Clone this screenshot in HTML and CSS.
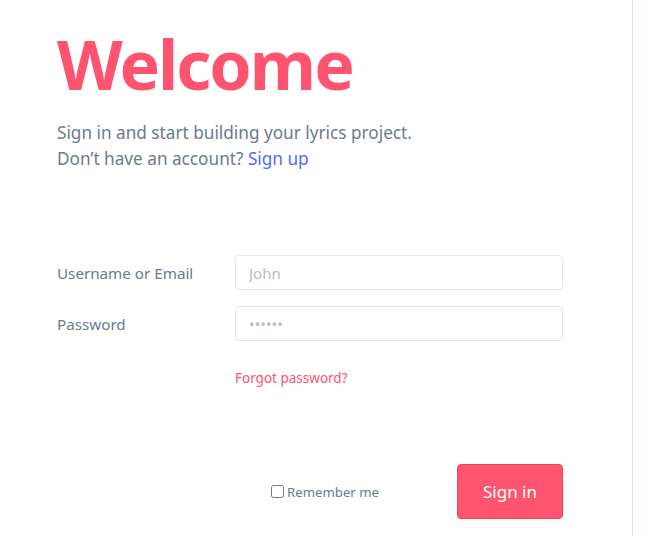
FILE: index.html
```html
<!DOCTYPE html>
<html lang="en">
<head>
<meta charset="utf-8">
<title>Welcome</title>
<link rel="stylesheet" href="styles.css">
</head>
<body>
<div class="layout">
  <main class="panel">
    <h1 class="title">Welcome</h1>
    <p class="intro">Sign in and start building your lyrics project.<br>Don’t have an account? <a href="#" class="link-blue">Sign up</a></p>
    <form class="form">
      <div class="row">
        <label class="label" for="user">Username or Email</label>
        <input class="input" id="user" type="text" placeholder="John">
      </div>
      <div class="row">
        <label class="label" for="pass">Password</label>
        <input class="input" id="pass" type="password" placeholder="••••••">
      </div>
      <div class="row">
        <span></span>
        <a href="#" class="forgot">Forgot password?</a>
      </div>
      <div class="actions">
        <label class="remember"><input type="checkbox" class="check"> Remember me</label>
        <button type="button" class="btn">Sign in</button>
      </div>
    </form>
  </main>
  <aside class="side"></aside>
</div>
</body>
</html>
```
FILE: styles.css
```css
* { box-sizing: border-box; }
html, body { margin: 0; height: 100%; }
body {
  font-family: "Noto Sans", "Open Sans", sans-serif;
  color: #6b7a90;
  background: #fcfcfd;
}
.layout {
  display: flex;
  height: 536px;
}
.panel {
  width: 633px;
  background: #fff;
  border-right: 1px solid #e2e4ee;
  padding: 22px 0 0 57px;
}
.side { flex: 1; }
.title {
  margin: 0;
  font-size: 68px;
  font-weight: 700;
  color: #ff546f;
  line-height: 84px;
  letter-spacing: -2px;
}
.intro {
  margin: 14px 0 0;
  font-size: 17.2px;
  line-height: 26px;
}
.link-blue { color: #4d6bfe; text-decoration: none; }
.form {
  margin-top: 83px;
  width: 506px;
}
.row {
  display: grid;
  grid-template-columns: 178px 328px;
  align-items: center;
  margin-bottom: 16px;
}
.label { font-size: 15.2px; }
.input {
  height: 35px;
  border: 1px solid #e3e6ee;
  border-radius: 4px;
  padding: 0 13px;
  font: inherit;
  font-size: 15px;
  color: #6b7a90;
}
.input::placeholder { color: #b5bbc6; }
.forgot {
  margin-top: 12px;
  font-size: 13.5px;
  color: #ff546f;
  text-decoration: none;
}
.actions {
  margin-top: 77px;
  display: flex;
  align-items: center;
  justify-content: flex-end;
  gap: 78px;
}
.remember {
  font-size: 13.2px;
  display: flex;
  align-items: center;
  gap: 3px;
}
.check { margin: 0; width: 13px; height: 13px; }
.btn {
  width: 106px;
  height: 55px;
  background: #ff546f;
  border: 1px solid #f5405e;
  border-radius: 4px;
  color: #fff;
  font: inherit;
  font-size: 17px;
}
```
